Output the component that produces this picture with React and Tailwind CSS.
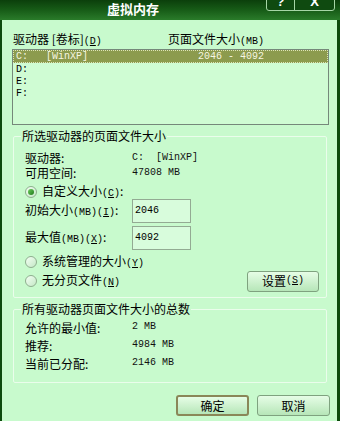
const cjk = "font-['Noto_Sans_CJK_SC','Liberation_Sans',sans-serif]";
const mono = "font-['Liberation_Mono','DejaVu_Sans_Mono',monospace]";

function Key({ k }) {
  return (
    <span className={`${mono} text-[10px]`}>
      (<span className="underline underline-offset-1">{k}</span>)
    </span>
  );
}

function Radio({ checked, children }) {
  return (
    <div className="flex items-center h-[14px]">
      <span className="w-[12px] h-[12px] rounded-full border border-[#8fae8f] bg-gradient-to-br from-[#f4fff4] to-[#c4e8c6] flex items-center justify-center">
        {checked && (
          <span className="w-[6px] h-[6px] rounded-full bg-gradient-to-br from-[#6ccf5c] to-[#1f7a1c]"></span>
        )}
      </span>
      <span className={`${cjk} text-[12px] leading-[14px] ml-[5px]`}>{children}</span>
    </div>
  );
}

function Row({ label, value, h = "h-[15px]" }) {
  return (
    <div className={`flex items-center ${h}`}>
      <span className={`${cjk} text-[12px] leading-[13px] w-[107px]`}>{label}</span>
      <span className={`${mono} text-[10px] leading-[12px] whitespace-pre text-[#111]`}>{value}</span>
    </div>
  );
}

function Field({ label, value }) {
  return (
    <div className="flex items-center h-[24px]">
      <span className={`${cjk} text-[12px] leading-[14px] w-[107px]`}>{label}</span>
      <div className={`${mono} text-[10px] w-[59px] h-[24px] border border-[#93aa93] bg-[#d8fcdc] pl-[2px] pt-[3px]`}>
        {value}
      </div>
    </div>
  );
}

function Btn({ children, primary, w = "w-[73px]" }) {
  return (
    <button
      className={`${w} h-[21px] rounded-[3px] bg-gradient-to-b from-[#e6fde6] to-[#b6e6b8] ${cjk} text-[12px] leading-[14px] flex items-center justify-center ${
        primary ? "border-2 border-[#8a8758]" : "border border-[#7fa27f]"
      }`}
    >
      {children}
    </button>
  );
}

export default function App() {
  const drives = ["D:", "E:", "F:"];

  return (
    <div className="w-[340px] h-[421px] overflow-hidden flex flex-col bg-[#c8facd] text-black">
      <div className="relative h-[20px] shrink-0 flex bg-gradient-to-b from-[#0b3f0b] via-[#175c17] to-[#2a7b2a]">
        <div className="w-[266px] flex justify-center pt-[1px]">
          <span className={`${cjk} text-[13px] leading-[15px] font-bold text-white`}>虚拟内存</span>
        </div>
        <div className="absolute right-[5px] top-[-8px] h-[19px] w-[69px] flex rounded-[3px] border border-[#a6d6a6] bg-[#0f4a10]">
          <span className="w-[28px] border-r border-[#a6d6a6] flex items-center justify-center text-white font-bold text-[13px] font-['Liberation_Sans',sans-serif]">?</span>
          <span className="flex-1 flex items-center justify-center text-white font-bold text-[13px] font-['Liberation_Sans',sans-serif]">X</span>
        </div>
      </div>

      <div className="flex-1 flex flex-col border-l-2 border-r-[3px] border-[#0d4a0d] pl-[10px] pr-[8px] pt-[13px]">
        <div className="flex h-[14px] items-center">
          <span className={`${cjk} text-[12px] leading-[14px] w-[155px] ml-[1px]`}>
            驱动器 [卷标]<Key k="D" />
          </span>
          <span className={`${cjk} text-[12px] leading-[14px]`}>
            页面文件大小<span className={`${mono} text-[10px]`}>(MB)</span>
          </span>
        </div>

        <div className="mt-[2px] h-[76px] border border-[#75887a] bg-[#cffcd3] flex flex-col">
          <div className={`${mono} text-[10px] h-[13px] flex items-center bg-[#8c9b4e] border border-dotted border-[#dfe4b8] text-[#f6f6e0] whitespace-pre pl-[2px]`}>
            <span className="w-[182px]">C:   [WinXP]</span>
            <span>2046 - 4092</span>
          </div>
          {drives.map((d) => (
            <div key={d} className={`${mono} text-[10px] h-[12px] flex items-center pl-[3px]`}>
              {d}
            </div>
          ))}
        </div>

        <fieldset className="mt-[4px] ml-[1px] mr-[2px] border border-[#eafdeb] rounded-[2px] pl-[11px] pr-[7px] pb-[5px]">
          <legend className={`${cjk} text-[12px] leading-[14px] ml-[-4px] px-[1px]`}>所选驱动器的页面文件大小</legend>
          <div className="pt-[7px] flex flex-col">
            <Row label="驱动器:" value="C:  [WinXP]" />
            <Row label="可用空间:" value="47808 MB" />
            <div className="mt-[5px]">
              <Radio checked>
                自定义大小<Key k="C" />:
              </Radio>
            </div>
            <Field
              label={
                <>
                  初始大小<span className={`${mono} text-[10px]`}>(MB)</span><Key k="I" />:
                </>
              }
              value="2046"
            />
            <div className="mt-[3px]">
              <Field
                label={
                  <>
                    最大值<span className={`${mono} text-[10px]`}>(MB)</span><Key k="X" />:
                  </>
                }
                value="4092"
              />
            </div>
            <div className="mt-[5px]">
              <Radio>
                系统管理的大小<Key k="Y" />
              </Radio>
            </div>
            <div className="mt-[1px] h-[22px] flex items-center justify-between">
              <Radio>
                无分页文件<Key k="N" />
              </Radio>
              <Btn w="w-[72px]">
                设置<Key k="S" />
              </Btn>
            </div>
          </div>
        </fieldset>

        <fieldset className="mt-[4px] ml-[1px] mr-[2px] border border-[#eafdeb] rounded-[2px] pl-[11px] pr-[7px] pb-[10px]">
          <legend className={`${cjk} text-[12px] leading-[14px] ml-[-4px] px-[1px]`}>所有驱动器页面文件大小的总数</legend>
          <div className="pt-[2px] flex flex-col">
            <Row label="允许的最小值:" value="2 MB" h="h-[18px]" />
            <Row label="推荐:" value="4984 MB" h="h-[18px]" />
            <Row label="当前已分配:" value="2146 MB" h="h-[18px]" />
          </div>
        </fieldset>

        <div className="mt-[12px] mr-[-1px] flex justify-end gap-[8px]">
          <Btn primary>确定</Btn>
          <Btn>取消</Btn>
        </div>
      </div>
    </div>
  );
}
